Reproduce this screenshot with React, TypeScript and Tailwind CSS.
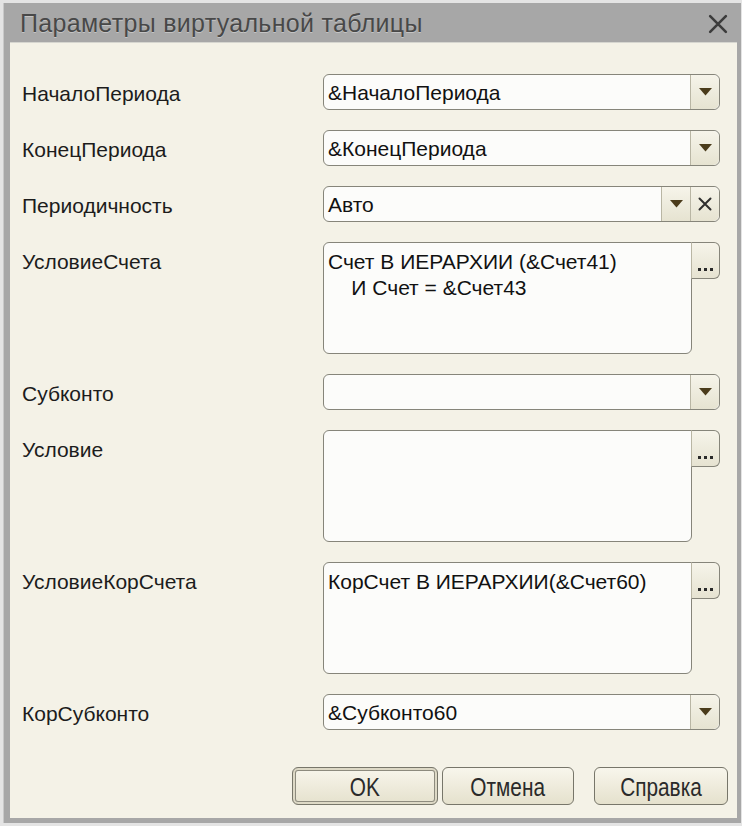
import React from 'react';

const font = { fontFamily: '"Liberation Sans", Arial, sans-serif' };

const Arrow = () => (
  <svg width="13" height="8" viewBox="0 0 13 8">
    <path d="M0 0 H13 L6.5 7.5 Z" fill="#4b3c1b" />
  </svg>
);

const Cross = ({ size = 14, color = '#2f2f2f', width = 2 }: { size?: number; color?: string; width?: number }) => (
  <svg width={size} height={size} viewBox="0 0 14 14">
    <path d="M1.5 1.5 L12.5 12.5 M12.5 1.5 L1.5 12.5" stroke={color} strokeWidth={width} strokeLinecap="round" />
  </svg>
);

const SideButton: React.FC<{ children: React.ReactNode; last?: boolean }> = ({ children, last }) => (
  <div
    className={`w-[29px] h-full flex items-center justify-center bg-gradient-to-b from-[#f6f4ea] to-[#e6e3d1] border-l border-[#b9b6a4] ${last ? 'rounded-r-[6px]' : ''}`}
  >
    {children}
  </div>
);

const Label: React.FC<{ text: string }> = ({ text }) => (
  <div className="w-[301px] h-[36px] pt-[4px] flex items-center text-[21px] text-[#1c1c1c] shrink-0">{text}</div>
);

const DropField: React.FC<{ label: string; value?: string; clear?: boolean }> = ({ label, value, clear }) => (
  <div className="flex items-start">
    <Label text={label} />
    <div className="w-[397px] h-[36px] flex rounded-[6px] border border-[#86857a] bg-[#fcfcfa] overflow-hidden">
      <div className="flex-1 flex items-center pl-[4px] pt-[2px] text-[21px] text-[#111]">{value}</div>
      <SideButton last={!clear}>
        <Arrow />
      </SideButton>
      {clear && (
        <SideButton last>
          <Cross />
        </SideButton>
      )}
    </div>
  </div>
);

const MemoField: React.FC<{ label: string; value?: string }> = ({ label, value }) => (
  <div className="flex items-start">
    <Label text={label} />
    <div className="flex items-start">
      <div className="w-[369px] h-[112px] rounded-l-[6px] rounded-br-[6px] border border-[#86857a] bg-[#fcfcfa] pl-[4px] pt-[6px] text-[21px] leading-[26px] text-[#111] whitespace-pre">
        {value}
      </div>
      <div className="w-[29px] h-[37px] -ml-px rounded-r-[6px] border border-l-[#b9b6a4] border-[#86857a] bg-gradient-to-b from-[#f6f4ea] to-[#e6e3d1] flex items-end justify-center gap-[3px] pb-[7px]">
        <span className="w-[3px] h-[3px] bg-[#2a2a2a]" />
        <span className="w-[3px] h-[3px] bg-[#2a2a2a]" />
        <span className="w-[3px] h-[3px] bg-[#2a2a2a]" />
      </div>
    </div>
  </div>
);

const DialogButton: React.FC<{ text: string; width: string; primary?: boolean }> = ({ text, width, primary }) => (
  <div
    className={`${width} h-[38px] rounded-[6px] border border-[#77766a] bg-gradient-to-b from-[#f8f6ec] to-[#e5e1cd] flex items-center justify-center text-[#2a2a2a] ${
      primary ? 'shadow-[inset_0_0_0_2px_#ddd9c6,inset_0_0_0_3px_#8d8b7e]' : ''
    }`}
  >
    <span className="inline-block text-[26px] leading-none scale-x-[0.8] pt-[1px]">{text}</span>
  </div>
);

export default function App() {
  return (
    <div className="w-[742px] h-[826px] bg-[#e4e4e4] pt-[3px] pl-[3px] pr-[1px] pb-[3px]" style={font}>
      <div className="w-full h-full bg-[#a7a7a7] border-l border-[#c9c9c9] flex flex-col">
        <div className="h-[39px] flex items-center justify-between pl-[16px] pr-[13px] pt-[2px]">
          <span className="text-[25px] tracking-[0.3px] text-[#484848] [text-shadow:0_1px_0_#c4c4c4]">Параметры виртуальной таблицы</span>
          <Cross size={20} color="#3c3c3c" width={1.8} />
        </div>
        <div className="flex-1 ml-[6px] mr-[4px] mb-[5px] bg-[#f4f2e7] border-t border-[#d6d6d0] pl-[12px] pr-[16px] pt-[31px] flex flex-col gap-[20px]">
          <DropField label="НачалоПериода" value="&НачалоПериода" />
          <DropField label="КонецПериода" value="&КонецПериода" />
          <DropField label="Периодичность" value="Авто" clear />
          <MemoField label="УсловиеСчета" value={'Счет В ИЕРАРХИИ (&Счет41)\n    И Счет = &Счет43'} />
          <DropField label="Субконто" />
          <MemoField label="Условие" />
          <MemoField label="УсловиеКорСчета" value="КорСчет В ИЕРАРХИИ(&Счет60)" />
          <DropField label="КорСубконто" value="&Субконто60" />
          <div className="flex justify-end items-center mt-[17px] -mr-[7px]">
            <DialogButton text="OK" width="w-[146px]" primary />
            <div className="w-[4px]" />
            <DialogButton text="Отмена" width="w-[132px]" />
            <div className="w-[20px]" />
            <DialogButton text="Справка" width="w-[134px]" />
          </div>
        </div>
      </div>
    </div>
  );
}
